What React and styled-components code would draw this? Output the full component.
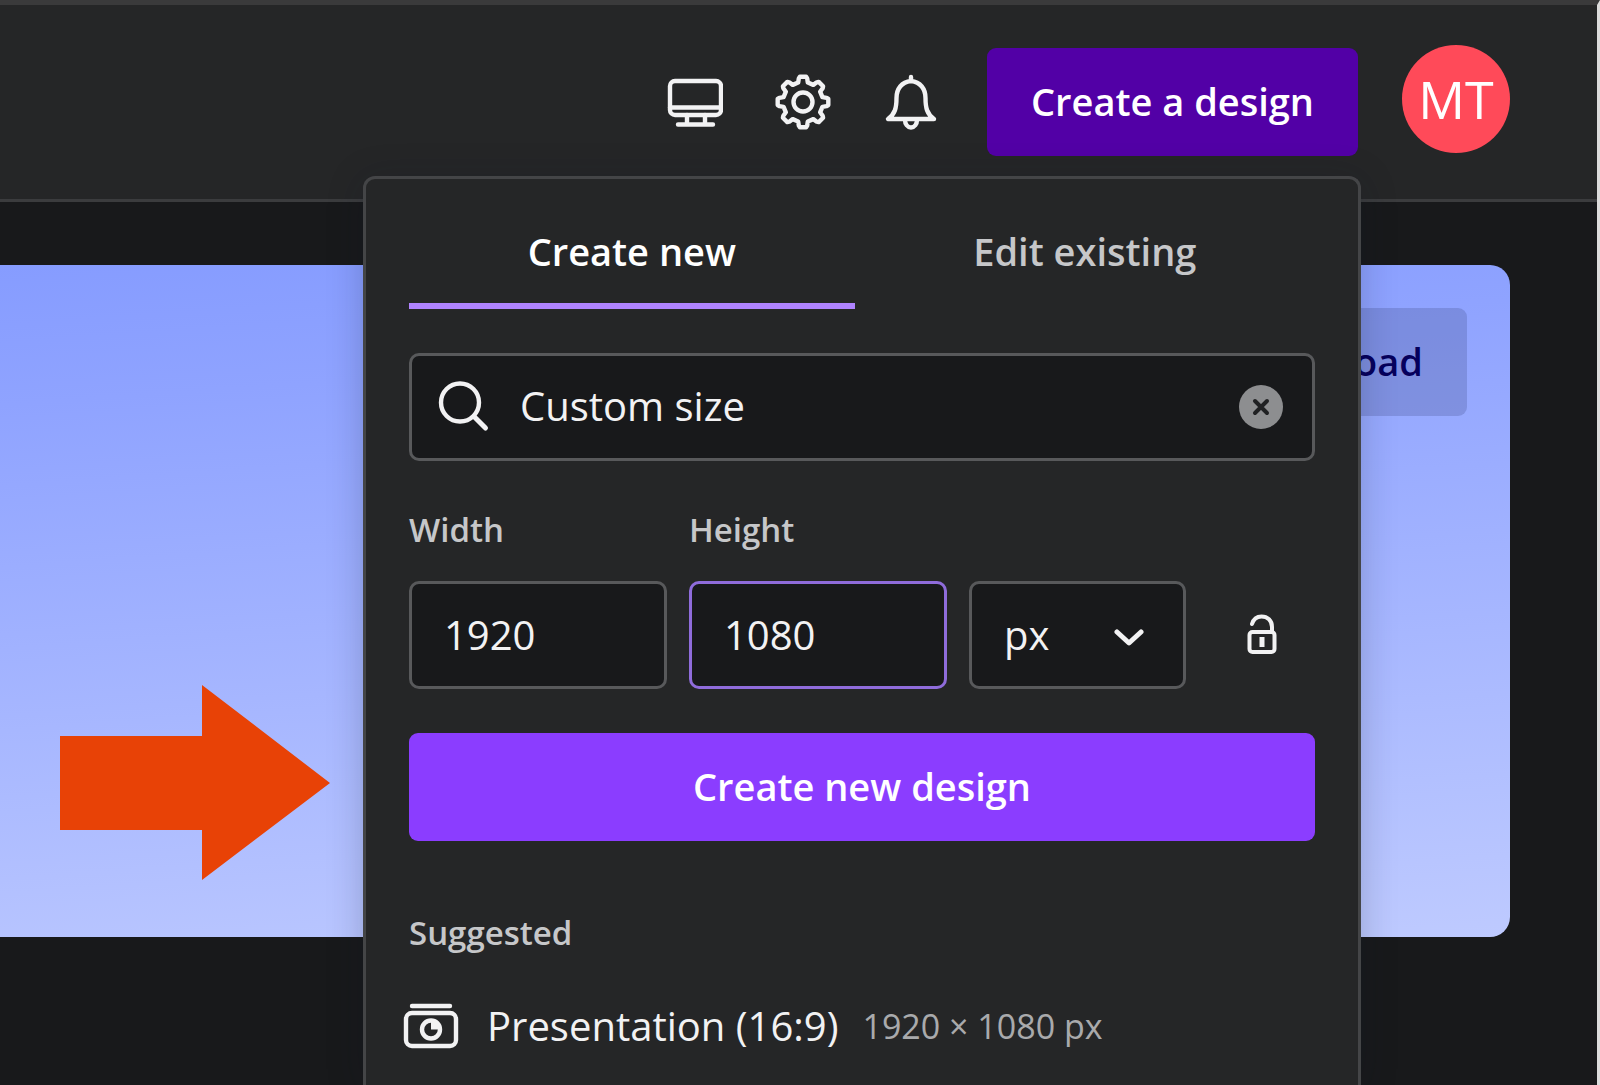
import React, { useState } from "react";
import styled, { createGlobalStyle, css } from "styled-components";

const GlobalStyle = createGlobalStyle`
  *, *::before, *::after { box-sizing: border-box; }
  body {
    margin: 0;
    background: #18191b;
    color: #f2f2f3;
    font-family: "Open Sans", "Noto Sans", sans-serif;
    font-size: 40px;
  }
  button, input, select { font: inherit; color: inherit; }
`;

const Page = styled.div`
  position: relative;
  display: flex;
  flex-direction: column;
  height: 100vh;
  overflow: hidden;
  border-top: 5px solid #3a3a3b;
  border-right: 3px solid #dcdcdc;
`;

const Header = styled.header`
  display: flex;
  align-items: center;
  justify-content: flex-end;
  padding: 40px 87px;
  background: #252627;
  border-bottom: 3px solid #3b3c3e;
`;

const HeaderNav = styled.nav`
  display: flex;
  margin-right: 22px;
`;

const IconButton = styled.button`
  display: flex;
  align-items: center;
  justify-content: center;
  height: 108px;
  width: ${(p) => p.$width || "108px"};
  padding: 0;
  border: 0;
  background: transparent;
  cursor: pointer;
`;

const SolidButton = styled.button`
  width: ${(p) => (p.$block ? "100%" : "auto")};
  height: 108px;
  padding: 0 44px 2px;
  border: 0;
  border-radius: 9px;
  background: ${(p) => p.$tone};
  color: ${(p) => p.$ink || "#ffffff"};
  font-size: 38px;
  font-weight: 600;
  white-space: nowrap;
  cursor: pointer;
`;

const AccountButton = styled.button`
  margin-left: 44px;
  padding: 0 0 6px;
  border: 0;
  background: transparent;
  cursor: pointer;
`;

const Avatar = styled.span`
  display: flex;
  align-items: center;
  justify-content: center;
  width: 108px;
  height: 108px;
  padding-bottom: 2px;
  border-radius: 50%;
  background: #ff4a59;
  color: #ffffff;
  font-size: 52px;
  font-weight: 500;
`;

const Main = styled.main`
  flex: 1;
  padding: 63px 87px 0 0;
`;

const Banner = styled.section`
  position: relative;
  display: flex;
  align-items: flex-start;
  justify-content: flex-end;
  min-height: 672px;
  padding: 43px;
  border-radius: 0 20px 20px 0;
  background: linear-gradient(176deg, #869cff 0%, #8fa3ff 18%, #becaff 100%);
`;

const Arrow = styled.svg`
  position: absolute;
  left: 60px;
  bottom: 57px;
  width: 270px;
  height: 195px;
`;

const Menu = styled.section`
  position: absolute;
  top: 171px;
  right: 236px;
  bottom: 0;
  width: 998px;
  padding: 44px 43px 0;
  border: 3px solid #444547;
  border-bottom: 0;
  border-radius: 12px 12px 0 0;
  background: #252627;
  box-shadow: 0 4px 36px rgba(20, 24, 40, 0.22);
`;

const Tabs = styled.div`
  display: flex;
  margin-bottom: 44px;
`;

const Tab = styled.button`
  flex: 1 1 auto;
  padding: 0 0 24px;
  border: 0;
  border-bottom: 6px solid ${(p) => (p.$active ? "#b083ff" : "transparent")};
  background: transparent;
  color: ${(p) => (p.$active ? "#ffffff" : "#c6c7c9")};
  font-size: 38px;
  font-weight: 600;
  line-height: 56px;
  cursor: pointer;
`;

const fieldBox = css`
  height: 108px;
  border: 3px solid ${(p) => (p.$focused ? "#8f6cdb" : "#58595b")};
  border-radius: 10px;
  background: #18191b;
  outline: none;
`;

const SearchBox = styled.div`
  ${fieldBox}
  display: flex;
  align-items: center;
  gap: 28px;
  padding: 0 0 0 26px;
  margin-bottom: 44px;
`;

const SearchInput = styled.input`
  flex: 1;
  min-width: 0;
  padding: 0 0 4px;
  border: 0;
  outline: none;
  background: transparent;
`;

const SizeForm = styled.form`
  display: grid;
  grid-template-columns: 258px 258px 217px 1fr;
  column-gap: 22px;
  align-items: end;
  margin-bottom: 44px;
`;

const Field = styled.div`
  display: flex;
  flex-direction: column;
  gap: 26px;
`;

const captionText = css`
  margin: 0;
  color: #c6c7c9;
  font-size: 33px;
  font-weight: 600;
  line-height: 50px;
`;

const Label = styled.label`
  ${captionText}
`;

const NumberInput = styled.input`
  ${fieldBox}
  width: 100%;
  padding: 0 32px 2px;
`;

const UnitBox = styled.div`
  display: grid;
  align-items: center;
  svg {
    grid-area: 1 / 1;
    justify-self: end;
    margin: 4px 42px 0 0;
    pointer-events: none;
  }
`;

const UnitSelect = styled.select`
  ${fieldBox}
  grid-area: 1 / 1;
  width: 100%;
  padding: 0 32px 2px;
  appearance: none;
`;

const Caption = styled.h2`
  ${captionText}
  margin: 67px 0 40px;
`;

const Suggestions = styled.ul`
  margin: 0 -10px;
  padding: 0;
  list-style: none;
`;

const Suggestion = styled.button`
  display: flex;
  align-items: center;
  width: 100%;
  padding: 0 4px;
  border: 0;
  background: transparent;
  line-height: 56px;
  white-space: nowrap;
  cursor: pointer;
`;

const SuggestionName = styled.span`
  margin: 0 24px 0 28px;
`;

const Dimensions = styled.span`
  color: #a9aaac;
  font-size: 34px;
`;

const stroke = {
  fill: "none",
  stroke: "#f2f2f3",
  strokeWidth: 4.4,
  strokeLinecap: "round",
  strokeLinejoin: "round",
};

const MonitorIcon = () => (
  <svg width="56" height="56" viewBox="0 0 56 56" {...stroke} aria-hidden="true">
    <rect x="3" y="7" width="51" height="34" rx="5" />
    <path d="M3 33.500H54M20 41v9M38 41v9M11 50.500H46" />
  </svg>
);

/* Outline of an eight-toothed cog, traced tooth by tooth around the centre. */
const cogPath = (() => {
  const pts = [];
  for (let i = 0; i < 8; i += 1) {
    [[-14, 20], [-10, 24], [-7, 25.5], [7, 25.5], [10, 24], [14, 20]].forEach(([deg, r]) => {
      const a = ((i * 45 + deg - 90) * Math.PI) / 180;
      pts.push(`${(28 + r * Math.cos(a)).toFixed(2)} ${(28 + r * Math.sin(a)).toFixed(2)}`);
    });
  }
  return `M${pts.join("L")}Z`;
})();

const CogIcon = () => (
  <svg width="56" height="56" viewBox="0 0 56 56" {...stroke} aria-hidden="true">
    <path d={cogPath} />
    <circle cx="28" cy="28" r="9.500" />
  </svg>
);

const BellIcon = () => (
  <svg width="56" height="56" viewBox="0 0 56 56" {...stroke} aria-hidden="true">
    <path d="M28 3v4M28 7C18.500 8 13.500 15 13.500 24C13.500 34 12 40 5 45H51C44 40 42.500 34 42.500 24C42.500 15 37.500 8 28 7Z" />
    <path d="M22 46C22 50 24.500 53.500 28 53.500S34 50 34 46" />
  </svg>
);

const SearchIcon = () => (
  <svg width="54" height="54" viewBox="0 0 54 54" {...stroke} aria-hidden="true">
    <circle cx="22" cy="22.500" r="19" />
    <path d="M36 36.500L47.500 48" strokeWidth="5" />
  </svg>
);

const ClearIcon = () => (
  <svg width="44" height="44" viewBox="0 0 44 44" aria-hidden="true">
    <circle cx="22" cy="22" r="22" fill="#8d8e90" />
    <path d="M16 16L28 28M28 16L16 28" stroke="#202123" strokeWidth="4" strokeLinecap="round" />
  </svg>
);

const ChevronIcon = () => (
  <svg width="30" height="20" viewBox="0 0 30 20" {...stroke} strokeWidth="5" aria-hidden="true">
    <path d="M3 5L15 16L27 5" />
  </svg>
);

const UnlockIcon = () => (
  <svg width="32" height="42" viewBox="0 0 32 42" {...stroke} strokeWidth="4" aria-hidden="true">
    <rect x="3.500" y="18" width="25" height="20" rx="3" />
    <path d="M6 10C7.500 5 11.500 2.500 15.500 2.500C21.500 2.500 26 6.500 26 13V18" />
    <path d="M16 23V33" strokeWidth="5" strokeLinecap="butt" />
  </svg>
);

const PresentationIcon = () => (
  <svg width="56" height="46" viewBox="0 0 56 46" {...stroke} aria-hidden="true">
    <path d="M9 3H47" />
    <rect x="3" y="10" width="50" height="33" rx="6" />
    <circle cx="28" cy="26.500" r="9" />
    <path d="M28 18A8.500 8.500 0 0 1 36.500 26.500H28Z" fill="#f2f2f3" stroke="none" />
  </svg>
);

export default function App() {
  const [query, setQuery] = useState("Custom size");
  const [tab, setTab] = useState("new");
  const [width, setWidth] = useState("1920");
  const [height, setHeight] = useState("1080");

  return (
    <>
      <GlobalStyle />
      <Page>
        <Header>
          <HeaderNav aria-label="Account tools">
            <IconButton aria-label="Desktop app"><MonitorIcon /></IconButton>
            <IconButton aria-label="Settings"><CogIcon /></IconButton>
            <IconButton aria-label="Notifications"><BellIcon /></IconButton>
          </HeaderNav>
          <SolidButton $tone="#5200a6" aria-expanded="true">Create a design</SolidButton>
          <AccountButton>
            <Avatar>MT</Avatar>
          </AccountButton>
        </Header>

        <Main>
          <Banner>
            <SolidButton $tone="rgba(60, 70, 130, 0.25)" $ink="#06005c">Upload</SolidButton>
            <Arrow viewBox="0 0 270 195" aria-hidden="true">
              <path d="M0 51H142V0L270 98L142 195V145H0Z" fill="#e84206" />
            </Arrow>
          </Banner>
        </Main>

        <Menu aria-label="Create a design">
          <Tabs role="tablist">
            <Tab role="tab" aria-selected={tab === "new"} $active={tab === "new"} onClick={() => setTab("new")}>
              Create new
            </Tab>
            <Tab role="tab" aria-selected={tab === "edit"} $active={tab === "edit"} onClick={() => setTab("edit")}>
              Edit existing
            </Tab>
          </Tabs>

          <SearchBox>
            <SearchIcon />
            <SearchInput
              type="text"
              aria-label="Search sizes"
              value={query}
              onChange={(e) => setQuery(e.target.value)}
            />
            <IconButton $width="102px" aria-label="Clear search" onClick={() => setQuery("")}>
              <ClearIcon />
            </IconButton>
          </SearchBox>

          <SizeForm id="size-form" onSubmit={(e) => e.preventDefault()}>
            <Field>
              <Label htmlFor="width">Width</Label>
              <NumberInput id="width" inputMode="numeric" value={width} onChange={(e) => setWidth(e.target.value)} />
            </Field>
            <Field>
              <Label htmlFor="height">Height</Label>
              <NumberInput id="height" inputMode="numeric" $focused value={height} onChange={(e) => setHeight(e.target.value)} />
            </Field>
            <UnitBox>
              <UnitSelect aria-label="Unit" defaultValue="px">
                <option value="px">px</option>
                <option value="in">in</option>
                <option value="mm">mm</option>
                <option value="cm">cm</option>
              </UnitSelect>
              <ChevronIcon />
            </UnitBox>
            <IconButton type="button" $width="100%" aria-label="Lock aspect ratio"><UnlockIcon /></IconButton>
          </SizeForm>

          <SolidButton type="submit" form="size-form" $block $tone="#8b3dff">Create new design</SolidButton>

          <Caption>Suggested</Caption>
          <Suggestions>
            <li>
              <Suggestion>
                <PresentationIcon />
                <SuggestionName>Presentation (16:9)</SuggestionName>
                <Dimensions>1920 × 1080 px</Dimensions>
              </Suggestion>
            </li>
          </Suggestions>
        </Menu>
      </Page>
    </>
  );
}
